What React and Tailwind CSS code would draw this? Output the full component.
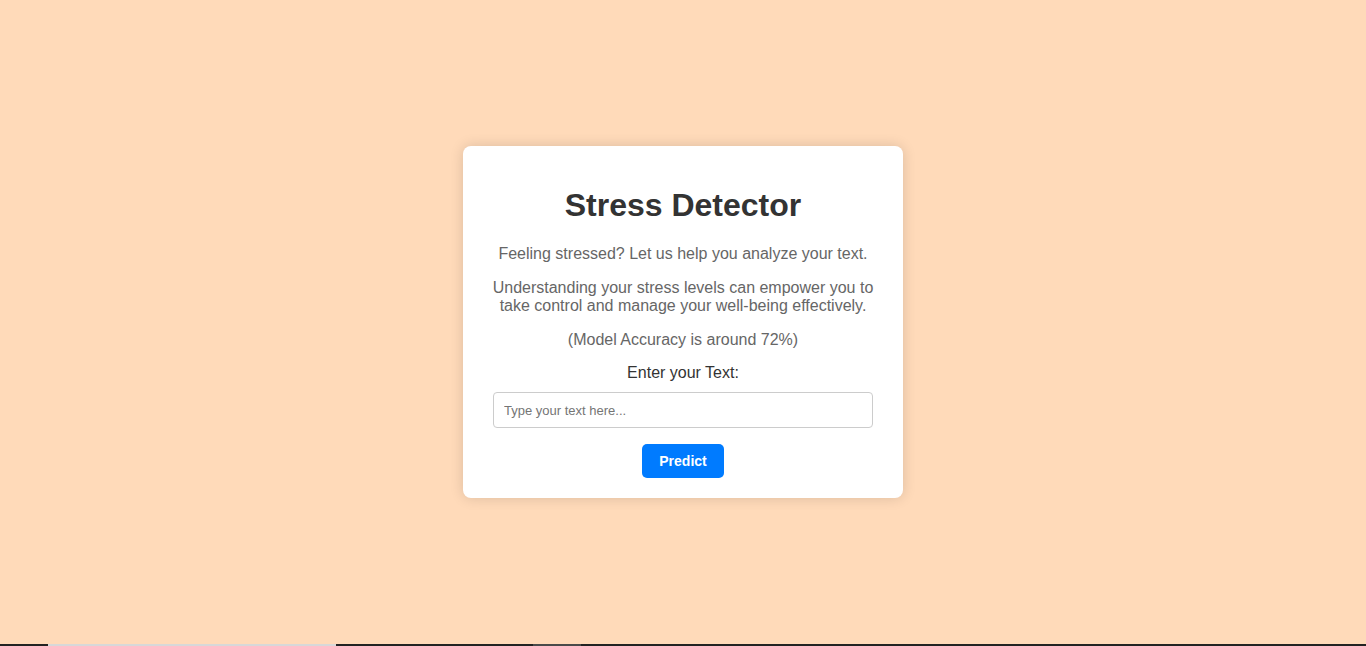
import { useState } from "react";

export default function App() {
  const [text, setText] = useState("");

  return (
    <div className="flex h-screen flex-col bg-[#ffdab9] font-['Liberation_Sans',Arial,sans-serif]">
      <div className="flex flex-1 items-center justify-center">
        <div className="w-[440px] rounded-lg bg-white px-[30px] py-5 text-center shadow-[0_0_14px_rgba(0,0,0,0.14)]">
          <h1 className="my-[21px] text-[32px] font-bold leading-[37px] text-[#333]">
            Stress Detector
          </h1>
          <p className="mb-4 text-base leading-[18px] text-[#666]">
            Feeling stressed? Let us help you analyze your text.
          </p>
          <p className="-mx-2 mb-4 text-base leading-[18px] text-[#666]">
            Understanding your stress levels can empower you to take control and
            manage your well-being effectively.
          </p>
          <p className="mb-[15px] text-base leading-[18px] text-[#666]">
            (Model Accuracy is around 72%)
          </p>
          <form onSubmit={(e) => e.preventDefault()}>
            <label className="block text-base leading-[18px] text-[#333]">
              Enter your Text:
            </label>
            <input
              type="text"
              value={text}
              onChange={(e) => setText(e.target.value)}
              placeholder="Type your text here..."
              className="mt-[10px] block h-9 w-full rounded border border-[#ccc] px-[10px] text-[13px] text-[#333] placeholder:text-[#757575] outline-none"
            />
            <button
              type="submit"
              className="mt-4 h-[34px] w-[82px] rounded-[5px] bg-[#007bff] text-sm font-bold text-white"
            >
              Predict
            </button>
          </form>
        </div>
      </div>
      {/* bottom strip */}
      <div className="flex h-[2px] bg-[#222]">
        <div className="ml-12 w-[288px] bg-[#d8d8d8]" />
        <div className="ml-[197px] w-12 bg-[#4a4a4a]" />
      </div>
    </div>
  );
}
